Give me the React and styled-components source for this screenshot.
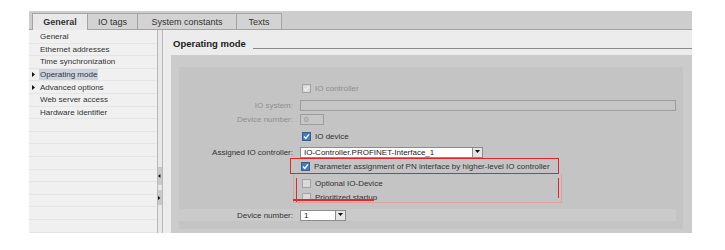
import React from "react";
import styled, { createGlobalStyle } from "styled-components";

const GlobalStyle = createGlobalStyle`
  body {
    margin: 0;
    background: #fff;
    font-family: "Liberation Sans", Arial, sans-serif;
    font-size: 8px;
    color: #333;
  }
`;

const Page = styled.div`
  padding: 11px 0 0 29px;
`;

const Frame = styled.div`
  width: 663px;
  height: 222px;
  display: flex;
  flex-direction: column;
`;

const TabStrip = styled.div`
  height: 19px;
  box-sizing: border-box;
  background: #cdcdcd;
  border-bottom: 1px solid #a4a4a4;
  display: flex;
  align-items: flex-end;
  padding-left: 3px;
`;

const Tab = styled.div`
  width: ${p => p.w}px;
  height: ${p => (p.active ? 17 : 16)}px;
  margin-bottom: ${p => (p.active ? -1 : 0)}px;
  box-sizing: border-box;
  border: 1px solid #a4a4a4;
  border-bottom: none;
  border-left-width: ${p => (p.first ? 1 : 0)}px;
  background: ${p => (p.active ? "#e9e9e9" : "#d3d3d3")};
  font-size: 9px;
  font-weight: ${p => (p.active ? "bold" : "normal")};
  color: #333;
  display: flex;
  align-items: center;
  justify-content: center;
  padding-bottom: ${p => (p.active ? 1 : 0)}px;
`;

const Body = styled.div`
  flex: 1;
  display: flex;
  min-height: 0;
`;

const Nav = styled.div`
  width: 128px;
  background: #f0f0f0;
  padding-top: 1px;
  overflow: hidden;
`;

const NavItem = styled.div`
  height: 12.6px;
  box-sizing: border-box;
  border-bottom: 1px solid #e5e5e5;
  display: flex;
  align-items: center;
  padding-left: 3px;
`;

const NavArrow = styled.span`
  width: 8px;
  display: flex;
  align-items: center;
`;

const NavLabel = styled.span`
  padding: 1px 1px;
  margin-left: -1px;
  background: ${p => (p.selected ? "#cbd3de" : "transparent")};
  white-space: nowrap;
`;

const Splitter = styled.div`
  width: 6px;
  box-sizing: border-box;
  background: #e8e8e8;
  border-left: 1px solid #b9b9b9;
  border-right: 1px solid #b9b9b9;
  display: flex;
  flex-direction: column;
  padding-top: 137px;
  gap: 5px;
`;

const SplitButton = styled.div`
  height: ${p => p.h}px;
  background: #c9c9c9;
  display: flex;
  align-items: center;
  justify-content: center;
`;

const Content = styled.div`
  flex: 1;
  background: #ececec;
  display: flex;
  flex-direction: column;
`;

const Header = styled.div`
  height: 25px;
  box-sizing: border-box;
  display: flex;
  align-items: flex-start;
  padding: 8px 0 0 10px;
`;

const Title = styled.span`
  font-size: 9.5px;
  font-weight: bold;
  line-height: 12px;
  color: #222;
`;

const Rule = styled.span`
  flex: 1;
  height: 10px;
  margin-left: 7px;
  border-bottom: 1px solid #8a8a8a;
`;

const OuterPanel = styled.div`
  flex: 1;
  margin-left: 8px;
  background: #cbcbcb;
  padding: 12px 9px 4px 8px;
  display: flex;
`;

const InnerPanel = styled.div`
  flex: 1;
  background: #c4c4c4;
  padding: 14px 7px 0 0;
  display: flex;
  flex-direction: column;
`;

const Row = styled.div`
  height: ${p => p.h}px;
  margin-top: ${p => p.mt || 0}px;
  display: grid;
  grid-template-columns: 114px 1fr;
  column-gap: 7px;
  align-items: center;
  background: ${p => p.bg || "transparent"};
`;

const Label = styled.span`
  text-align: right;
  white-space: nowrap;
  color: ${p => (p.disabled ? "#8f8f8f" : "#333")};
`;

const Field = styled.div`
  display: flex;
  align-items: center;
  gap: 4px;
  padding-left: ${p => p.pl || 0}px;
  color: ${p => (p.disabled ? "#8f8f8f" : "#333")};
  white-space: nowrap;
`;

const Input = styled.div`
  width: ${p => p.w}px;
  height: 11px;
  box-sizing: border-box;
  border: 1px solid ${p => (p.disabled ? "#9d9d9d" : "#8c8c8c")};
  background: ${p => (p.disabled ? "#c6c6c6" : "#fff")};
  color: ${p => (p.disabled ? "#8f8f8f" : "#222")};
  padding-left: 3px;
  line-height: 9px;
`;

const Select = styled.div`
  display: flex;
  height: 11px;
`;

const SelectButton = styled.div`
  width: 10px;
  box-sizing: border-box;
  border: 1px solid #8c8c8c;
  border-left: none;
  background: #e4e4e4;
  display: flex;
  align-items: center;
  justify-content: center;
`;

const Box = styled.span`
  width: 9px;
  height: 9px;
  box-sizing: border-box;
  border: 1px solid ${p => (p.state === "on" ? "#3a5f8f" : "#a3a3a3")};
  background: ${p =>
    p.state === "on" ? "#3d7cc9" : p.state === "off-disabled" ? "#cfcfcf" : "#d9d9d9"};
  display: flex;
  align-items: center;
  justify-content: center;
  flex: none;
`;

const Highlight = styled.div`
  margin-left: 111px;
  width: 269px;
  height: 16px;
  box-sizing: border-box;
  border: 1.5px solid #e0262c;
  display: flex;
  align-items: center;
  padding-left: 10px;
`;

const Annotated = styled.div`
  position: relative;
  margin-left: 114px;
  width: 269px;
  height: 29px;
  box-sizing: border-box;
  border: 1px solid #d9a3a3;
  border-top: none;
  padding: 2px 0 0 8px;
`;

const PlainRow = styled.div`
  height: ${p => p.h}px;
  display: flex;
  align-items: ${p => (p.clip ? "flex-start" : "center")};
  padding-top: ${p => (p.clip ? 3 : 0)}px;
  box-sizing: border-box;
  overflow: hidden;
`;

const Mark = styled.span`
  position: absolute;
  left: ${p => p.x}px;
  top: ${p => p.y}px;
  width: ${p => p.w}px;
  height: ${p => p.h}px;
  background: #dd2a2f;
`;

const Check = ({ color }) => (
  <svg width="7" height="7" viewBox="0 0 7 7">
    <path d="M1 3.6 L2.8 5.4 L6 1.4" fill="none" stroke={color} strokeWidth="1.4" />
  </svg>
);

const Triangle = ({ dir = "down", size = 5 }) => {
  const pts =
    dir === "down"
      ? "0,0 5,0 2.5,3"
      : dir === "right"
      ? "0,0 3,2.5 0,5"
      : "3,0 0,2.5 3,5";
  return (
    <svg width={size} height={size} viewBox="0 0 5 5">
      <polygon points={pts} fill="#111" />
    </svg>
  );
};

const CheckBox = ({ state }) => (
  <Box state={state}>
    {state === "on" && <Check color="#fff" />}
    {state === "on-disabled" && <Check color="#eeeeee" />}
  </Box>
);

const navItems = [
  { label: "General" },
  { label: "Ethernet addresses" },
  { label: "Time synchronization" },
  { label: "Operating mode", arrow: true, selected: true },
  { label: "Advanced options", arrow: true },
  { label: "Web server access" },
  { label: "Hardware identifier" }
];

const tabs = [
  { label: "General", w: 56, active: true },
  { label: "IO tags", w: 50 },
  { label: "System constants", w: 99 },
  { label: "Texts", w: 45 }
];

const App = () => (
  <>
    <GlobalStyle />
    <Page>
      <Frame>
        <TabStrip>
          {tabs.map((t, i) => (
            <Tab key={t.label} w={t.w} active={t.active} first={i === 0}>
              {t.label}
            </Tab>
          ))}
        </TabStrip>
        <Body>
          <Nav>
            {Array.from({ length: 17 }).map((_, i) => {
              const item = navItems[i];
              return (
                <NavItem key={i}>
                  <NavArrow>{item && item.arrow && <Triangle dir="right" size={5} />}</NavArrow>
                  {item && <NavLabel selected={item.selected}>{item.label}</NavLabel>}
                </NavItem>
              );
            })}
          </Nav>
          <Splitter>
            <SplitButton h={18}>
              <Triangle dir="left" size={4} />
            </SplitButton>
            <SplitButton h={15}>
              <Triangle dir="right" size={4} />
            </SplitButton>
          </Splitter>
          <Content>
            <Header>
              <Title>Operating mode</Title>
              <Rule />
            </Header>
            <OuterPanel>
              <InnerPanel>
                <Row h={14}>
                  <span />
                  <Field pl={2} disabled>
                    <CheckBox state="on-disabled" />
                    IO controller
                  </Field>
                </Row>
                <Row h={14} mt={3}>
                  <Label disabled>IO system:</Label>
                  <Input w={376} disabled />
                </Row>
                <Row h={14}>
                  <Label disabled>Device number:</Label>
                  <Input w={24} disabled>0</Input>
                </Row>
                <Row h={14} mt={3}>
                  <span />
                  <Field pl={2}>
                    <CheckBox state="on" />
                    IO device
                  </Field>
                </Row>
                <Row h={12} mt={3}>
                  <Label>Assigned IO controller:</Label>
                  <Select>
                    <Input w={173}>IO-Controller.PROFINET-Interface_1</Input>
                    <SelectButton>
                      <Triangle dir="down" size={5} />
                    </SelectButton>
                  </Select>
                </Row>
                <Highlight>
                  <Field>
                    <CheckBox state="on" />
                    Parameter assignment of PN interface by higher-level IO controller
                  </Field>
                </Highlight>
                <Annotated>
                  <PlainRow h={14}>
                    <Field>
                      <CheckBox state="off" />
                      Optional IO-Device
                    </Field>
                  </PlainRow>
                  <PlainRow h={10} clip>
                    <Field>
                      <CheckBox state="off" />
                      Prioritized startup
                    </Field>
                  </PlainRow>
                  <Mark x={2} y={4} w={1} h={24} />
                  <Mark x={-1} y={25} w={81} h={1.5} />
                  <Mark x={264} y={4} w={1} h={20} />
                </Annotated>
                <Row h={12} mt={6} bg="#cacaca">
                  <Label>Device number:</Label>
                  <Select>
                    <Input w={36}>1</Input>
                    <SelectButton>
                      <Triangle dir="down" size={5} />
                    </SelectButton>
                  </Select>
                </Row>
              </InnerPanel>
            </OuterPanel>
          </Content>
        </Body>
      </Frame>
    </Page>
  </>
);

export default App;
